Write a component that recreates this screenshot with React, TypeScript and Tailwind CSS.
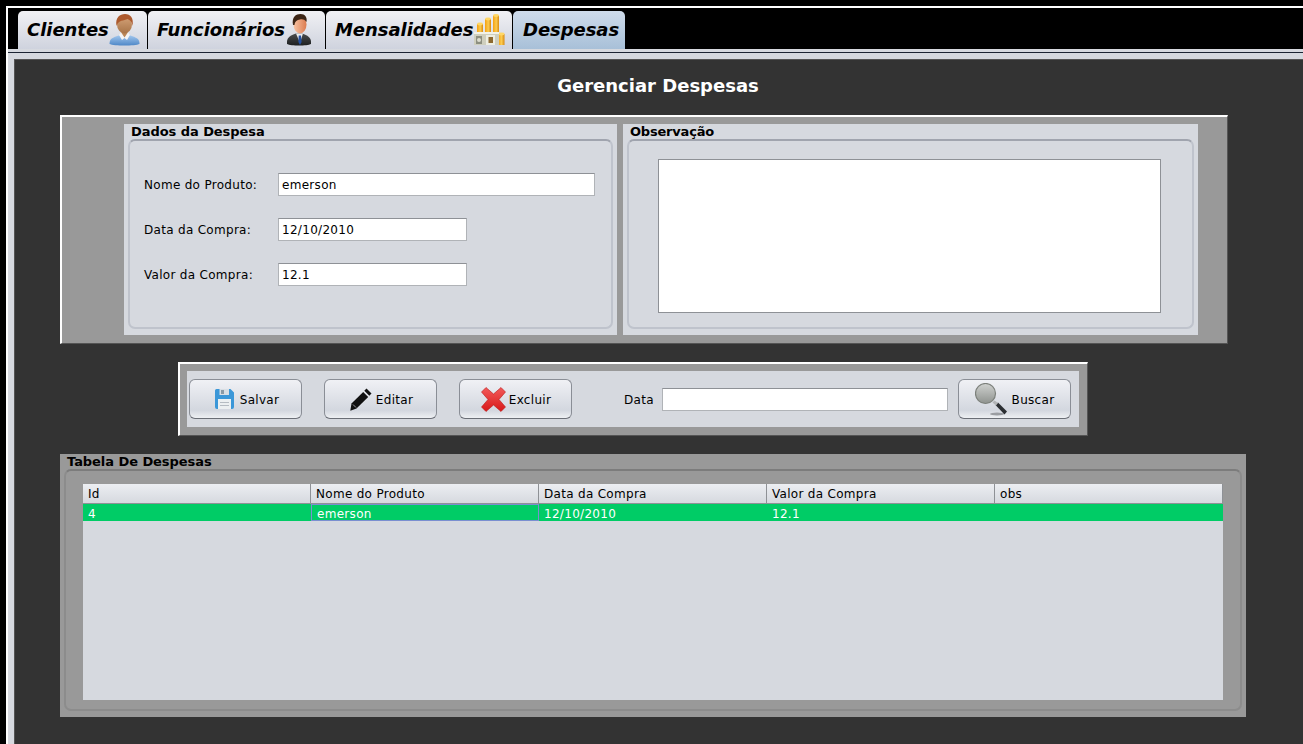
import React from "react";

const F = "font-['DejaVu_Sans',sans-serif]";

function ClientIcon() {
  return (
    <svg width="31" height="32" viewBox="0 0 31 32" className="shrink-0">
      <defs>
        <linearGradient id="cb" x1="0" y1="0" x2="0" y2="1"><stop offset="0" stopColor="#a4c8ee" /><stop offset="1" stopColor="#4f88c8" /></linearGradient>
        <linearGradient id="cf" x1="0" y1="0" x2="0" y2="1"><stop offset="0" stopColor="#d6a47a" /><stop offset="1" stopColor="#a87448" /></linearGradient>
      </defs>
      <path d="M0.5 30 C0.5 25 3 23.5 11 21 L20 21 C28 23.5 30.5 25 30.5 30 C26 32 5 32 0.5 30 Z" fill="url(#cb)" />
      <path d="M10 21 L13 26 L15.5 24 L18 26 L21 21 L18.5 18 L12.5 18 Z" fill="#f4f4f4" />
      <path d="M12.5 19 L15.5 23.5 L18.5 19 L18 15 L13 15 Z" fill="#bb8656" />
      <ellipse cx="15.5" cy="10.5" rx="7.5" ry="9" fill="url(#cf)" />
      <path d="M7.5 12 C6 3.5 11 0 16 0 C21.5 0 25 4 23.5 12 C23 7.5 21 6 18.5 5 C15 7 9.5 5.5 7.5 12 Z" fill="#ad5a2e" />
    </svg>
  );
}

function WorkerIcon() {
  return (
    <svg width="24" height="32" viewBox="0 0 24 32" className="shrink-0">
      <defs>
        <linearGradient id="wf" x1="0" y1="0" x2="1" y2="0"><stop offset="0" stopColor="#f8c4a4" /><stop offset="1" stopColor="#dc7c50" /></linearGradient>
        <linearGradient id="ws" x1="0" y1="0" x2="0" y2="1"><stop offset="0" stopColor="#4a4d4e" /><stop offset="1" stopColor="#1e2021" /></linearGradient>
      </defs>
      <path d="M0 30 C-0.5 24 2 22 9 19.5 L15 19.5 C22 22 24.5 24 24 30 C20 32 4 32 0 30 Z" fill="url(#ws)" />
      <path d="M9 19.5 L13 29 L16 19.5 Z" fill="#ececec" />
      <path d="M11.7 21.5 L14 21.5 L14.6 28 L13 31 L11.4 28 Z" fill="#2450a0" />
      <ellipse cx="13" cy="10.5" rx="6.5" ry="9" fill="url(#wf)" />
      <path d="M6 11 C4.5 3 9 0 13.5 0 C18 0 20.5 3.5 19.5 8 C17.5 5 15 5 13 5.5 C10 6 8 7 7.5 11 Z" fill="#3c2516" />
    </svg>
  );
}

function CoinStack({ x, y, w, b }: { x: number; y: number; w: number; b: number }) {
  return (
    <g>
      <rect x={x} y={y} width={w} height={b - y} fill="url(#g)" />
      <ellipse cx={x + w / 2} cy={y} rx={w / 2} ry={1.4} fill="#ffd766" />
    </g>
  );
}

function CoinsIcon() {
  return (
    <svg width="32" height="32" viewBox="0 0 32 32" className="shrink-0">
      <defs>
        <linearGradient id="g" x1="0" y1="0" x2="1" y2="0"><stop offset="0" stopColor="#f5a010" /><stop offset="0.55" stopColor="#fbcb50" /><stop offset="1" stopColor="#d88a10" /></linearGradient>
      </defs>
      <CoinStack x={4} y={10} w={6} b={22} />
      <CoinStack x={12} y={5} w={6} b={22} />
      <CoinStack x={20} y={1.5} w={6} b={22} />
      <CoinStack x={25} y={20} w={6.5} b={31} />
      <rect x="1" y="18" width="25" height="13" fill="#cfcfbe" />
      <rect x="1" y="18" width="25" height="2" fill="#f2f2e8" />
      <rect x="3" y="22" width="6" height="8" fill="#8d8f80" />
      <circle cx="6" cy="26" r="2" fill="#dcdcce" />
      <rect x="13" y="21" width="9" height="10" fill="#eeeee2" />
      <rect x="15.5" y="23" width="4.5" height="6" fill="#8d6a30" />
    </svg>
  );
}

function FloppyIcon() {
  return (
    <svg width="19" height="20" viewBox="0 0 19 20" className="shrink-0">
      <path d="M1.5 0 H15.5 L19 3.5 V18 A2 2 0 0 1 17 20 H2 A2 2 0 0 1 0 18 V1.5 A1.5 1.5 0 0 1 1.5 0 Z" fill="#3b97d8" />
      <rect x="4.5" y="0" width="9.5" height="6" fill="#d8dee4" />
      <rect x="6" y="1" width="3" height="4" fill="#8a9aa6" />
      <rect x="3" y="10" width="13" height="10" fill="#ecf0f1" />
      <rect x="5" y="13" width="9" height="1" fill="#b5bcc2" />
      <rect x="5" y="16" width="9" height="1" fill="#b5bcc2" />
    </svg>
  );
}

function PencilIcon() {
  return (
    <svg width="22" height="23" viewBox="0 0 22 23" className="shrink-0">
      <path d="M16.5 0.5 L21.5 5.5 L19.3 7.8 L14.3 2.8 Z" fill="#111" />
      <path d="M13.2 3.9 L18.2 8.9 L6.5 20.6 L0.3 22.7 L1.5 15.6 Z" fill="#111" />
      <path d="M3 16.5 L6 19.5" stroke="#d5d9e1" strokeWidth="0.7" />
    </svg>
  );
}

function CrossIcon() {
  return (
    <svg width="25" height="25" viewBox="0 0 25 25" className="shrink-0">
      <defs>
        <linearGradient id="x" x1="0" y1="0" x2="0" y2="1"><stop offset="0" stopColor="#f25a5a" /><stop offset="1" stopColor="#d81818" /></linearGradient>
      </defs>
      <path d="M5 0.5 L12.5 7 L20 0.5 L24.5 5 L18 12.5 L24.5 20 L20 24.5 L12.5 18 L5 24.5 L0.5 20 L7 12.5 L0.5 5 Z" fill="url(#x)" stroke="#b81a1a" strokeWidth="0.6" />
    </svg>
  );
}

function LensIcon() {
  return (
    <svg width="33" height="33" viewBox="0 0 33 33" className="shrink-0">
      <defs>
        <linearGradient id="l" x1="0" y1="0" x2="0" y2="1"><stop offset="0" stopColor="#cfd1cf" /><stop offset="1" stopColor="#8f938f" /></linearGradient>
      </defs>
      <ellipse cx="22" cy="31" rx="7" ry="1.5" fill="#9a9da2" />
      <path d="M20.5 22 L23 19.5 L32 28.5 L29.5 31.5 Z" fill="#2c2f33" />
      <path d="M17.5 19.5 L19.5 17.5 L23 20 L21 22.5 Z" fill="#b2b4b6" />
      <circle cx="10.5" cy="10.5" r="10" fill="url(#l)" stroke="#7c807b" strokeWidth="1.2" />
    </svg>
  );
}

function Tab({ label, icon, active, w, pl }: { label: string; icon?: React.ReactNode; active?: boolean; w: string; pl: string }) {
  return (
    <div
      className={`${w} ${pl} h-[38px] flex items-center rounded-t-[5px] ${
        active ? "bg-gradient-to-b from-[#cfdceb] to-[#a8c0d8]" : "bg-gradient-to-b from-[#f1f1f4] to-[#cfd3de]"
      }`}
    >
      <span className="text-[18px] font-bold italic text-black leading-none tracking-[-0.05px]">{label}</span>
      {icon}
    </div>
  );
}

function Btn({ label, icon, gap, pl }: { label: string; icon: React.ReactNode; gap: string; pl: string }) {
  return (
    <div className={`w-[113px] h-[40px] shrink-0 flex items-center justify-center ${gap} ${pl} rounded-[6px] border border-[#8a8e96] border-b-[#6a6e76] bg-gradient-to-b from-[#f0f1f5] via-[#d3d7df] via-[80%] to-[#eef0f3] text-[12px] tracking-[0.3px] text-black`}>
      {icon}
      <span className="pt-px">{label}</span>
    </div>
  );
}

function Field({ label, value, w }: { label: string; value: string; w: string }) {
  return (
    <div className="flex items-center h-[23px]">
      <span className="w-[134px] shrink-0 text-[12px] tracking-[0.3px] text-black">{label}</span>
      <div className={`${w} h-[23px] bg-white border border-[#b0b3b7] border-t-[#8e9196] pl-[3px] flex items-center text-[12px] tracking-[0.3px] text-black`}>{value}</div>
    </div>
  );
}

const cols = ["Id", "Nome do Produto", "Data da Compra", "Valor da Compra", "obs"];
const row = ["4", "emerson", "12/10/2010", "12.1", ""];

export default function App() {
  return (
    <div className={`${F} w-[1303px] h-[744px] overflow-hidden bg-black pl-[6px] pt-[6px]`}>
      <div className="h-[738px] border-l-2 border-t-2 border-white flex flex-col">
        {/* tab strip */}
        <div className="h-[41px] shrink-0 flex items-end pl-[10px] gap-px bg-black">
          <Tab w="w-[129px]" pl="pl-[9px]" label="Clientes" icon={<ClientIcon />} />
          <Tab w="w-[177px]" pl="pl-[9px]" label="Funcionários" icon={<div className="ml-[2px]"><WorkerIcon /></div>} />
          <Tab w="w-[186px]" pl="pl-[9px]" label="Mensalidades" icon={<CoinsIcon />} />
          <Tab w="w-[112px]" pl="pl-[10px]" label="Despesas" active />
        </div>
        <div className="h-[3px] shrink-0 bg-[#d6d9df]" />
        <div className="h-px shrink-0 bg-[#1c2433]" />
        {/* content holder */}
        <div className="flex-1 bg-[#d6d9df] pl-[6px] pt-[6px] min-h-0">
          <div className="h-full border-t border-l border-[#555] bg-[#333333] pl-[45px] flex flex-col">
            <div className="h-[55px] shrink-0 pb-[5px] flex items-center justify-center text-[18px] font-bold text-white pr-[47px]">
              Gerenciar Despesas
            </div>

            {/* form panel */}
            <div className="w-[1168px] h-[229px] shrink-0 border-l-2 border-t-2 border-white border-r border-r-[#555] border-b border-b-[#555] bg-[#999999] pl-[62px] pt-[7px]">
              <div className="flex gap-[6px] h-[211px]">
                <div className="w-[493px] h-full bg-[#d6d9df]">
                  <div className="h-[15px] pl-[7px] text-[13px] font-bold text-black leading-[15px] tracking-[-0.06px]">Dados da Despesa</div>
                  <div className="ml-[4px] mr-[4px] h-[190px] border-2 border-[#bfc3cc] border-t-[#a0a4ae] rounded-[7px] pl-[14px] pt-[32px] flex flex-col gap-[22px]">
                    <Field label="Nome do Produto:" value="emerson" w="w-[317px]" />
                    <Field label="Data da Compra:" value="12/10/2010" w="w-[189px]" />
                    <Field label="Valor da Compra:" value="12.1" w="w-[189px]" />
                  </div>
                </div>
                <div className="w-[575px] h-full bg-[#d6d9df]">
                  <div className="h-[15px] pl-[7px] text-[13px] font-bold text-black leading-[15px] tracking-[-0.2px]">Observação</div>
                  <div className="ml-[4px] mr-[4px] h-[190px] border-2 border-[#bfc3cc] border-t-[#a0a4ae] rounded-[7px] pl-[29px] pt-[18px]">
                    <div className="w-[503px] h-[154px] bg-white border border-[#8e9196]" />
                  </div>
                </div>
              </div>
            </div>

            {/* toolbar */}
            <div className="mt-[18px] ml-[118px] w-[910px] h-[74px] shrink-0 border-l-2 border-t-2 border-white border-r border-r-[#555] border-b border-b-[#555] bg-[#999999] pl-[7px] pt-[7px]">
              <div className="w-[892px] h-[56px] bg-[#d6d9df] pl-[2px] flex items-center">
                <Btn label="Salvar" gap="gap-[6px]" pl="pl-[3px]" icon={<FloppyIcon />} />
                <div className="w-[22px] shrink-0" />
                <Btn label="Editar" gap="gap-[4px]" pl="pl-[2px]" icon={<PencilIcon />} />
                <div className="w-[22px] shrink-0" />
                <Btn label="Excluir" gap="gap-[3px]" pl="pl-px" icon={<CrossIcon />} />
                <span className="ml-[52px] w-[38px] shrink-0 pt-px text-[12px] tracking-[0.3px] text-black">Data</span>
                <div className="w-[286px] h-[23px] shrink-0 bg-white border border-[#b0b3b7] border-t-[#8e9196]" />
                <div className="w-[10px] shrink-0" />
                <Btn label="Buscar" gap="gap-[4px]" pl="pl-0" icon={<LensIcon />} />
              </div>
            </div>

            {/* table panel */}
            <div className="mt-[18px] w-[1186px] h-[263px] shrink-0 bg-[#999999] relative pl-[4px] pt-[15px]">
              <div className="absolute left-[7px] top-0 text-[13px] font-bold text-black leading-[15px] tracking-[-0.06px]">Tabela De Despesas</div>
              <div className="w-[1178px] h-[242px] border-2 border-[#8c8c8c] border-t-[#7c7c7c] rounded-[7px] pl-[17px] pt-[13px]">
                <div className="w-[1140px] h-[216px] bg-[#d6d9df] flex flex-col">
                  <div className="h-[20px] shrink-0 flex bg-gradient-to-b from-[#eceef2] to-[#d6d9df] border-b border-[#8e9196]">
                    {cols.map((c) => (
                      <div key={c} className="w-[228px] pl-[5px] flex items-center border-r border-[#8e9196] text-[12px] tracking-[0.3px] text-black">{c}</div>
                    ))}
                  </div>
                  <div className="h-[17px] shrink-0 flex bg-[#00cc66]">
                    {row.map((c, i) => (
                      <div key={i} className={`w-[228px] pl-[5px] pt-[2px] flex items-center text-[12px] tracking-[0.3px] text-white ${i === 1 ? "border border-[#7a8fd0]" : ""}`}>{c}</div>
                    ))}
                  </div>
                </div>
              </div>
            </div>
          </div>
        </div>
      </div>
    </div>
  );
}
